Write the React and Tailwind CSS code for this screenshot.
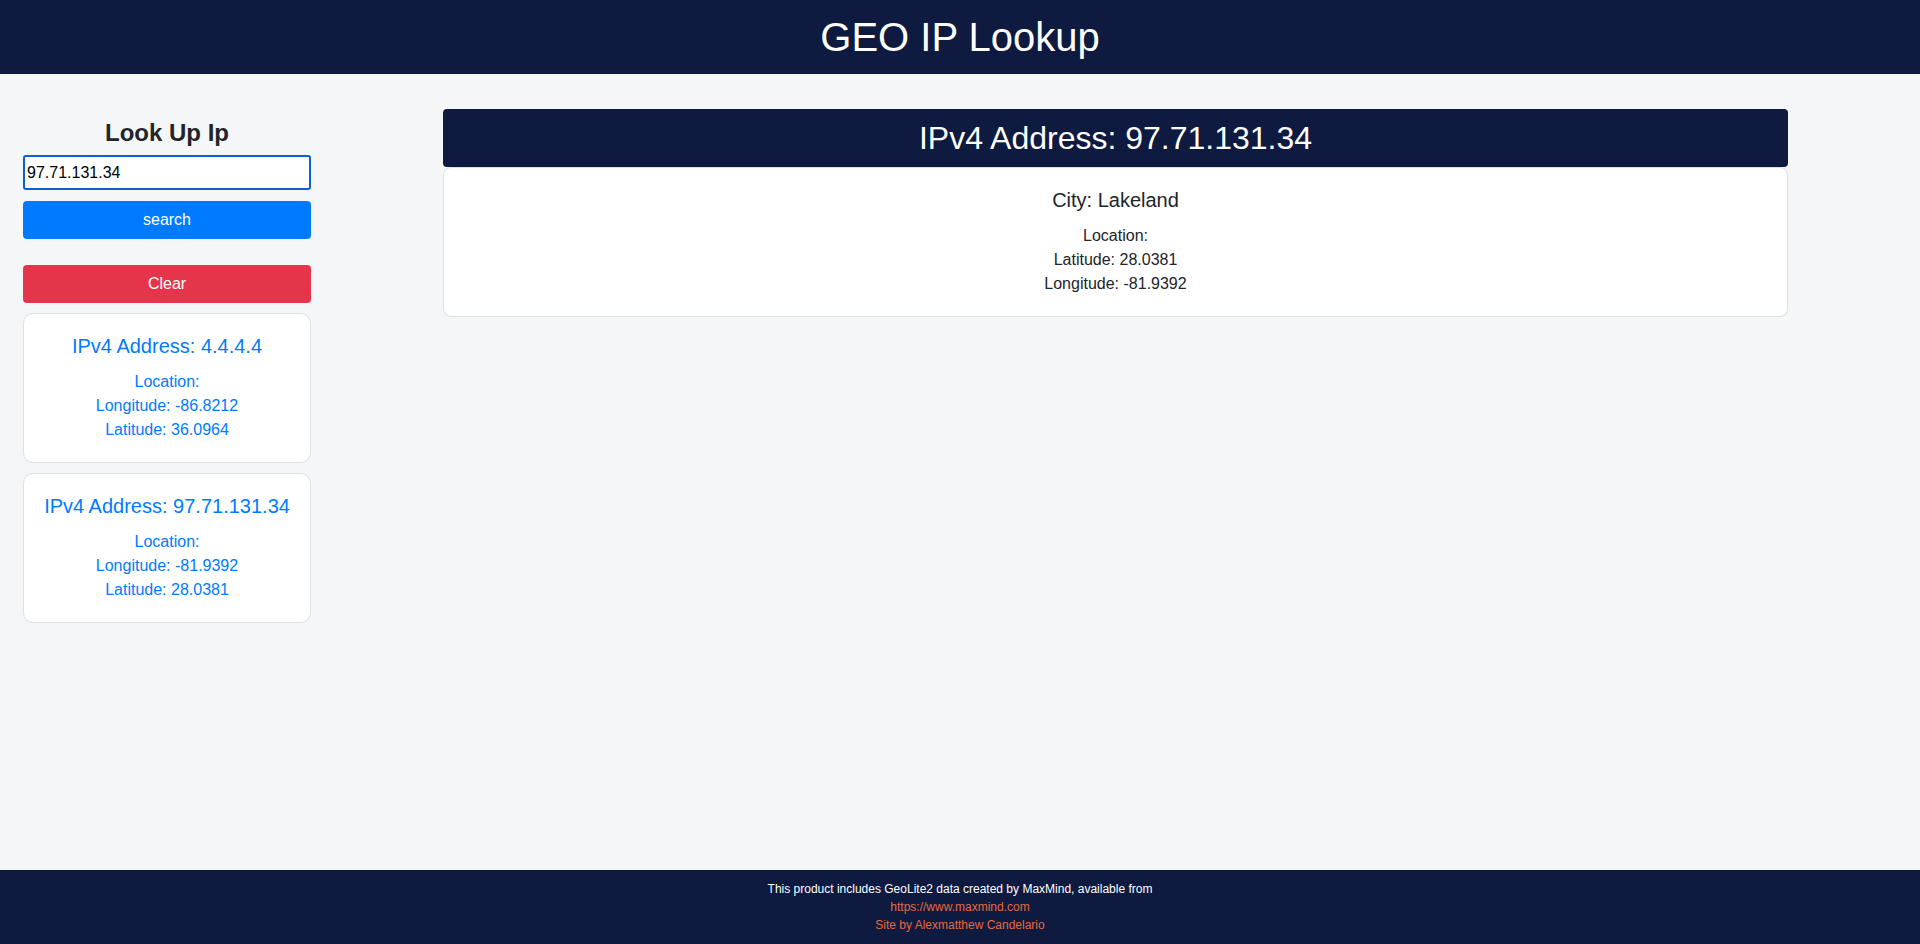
import { useState } from "react";

const history = [
  { ip: "4.4.4.4", longitude: "-86.8212", latitude: "36.0964" },
  { ip: "97.71.131.34", longitude: "-81.9392", latitude: "28.0381" },
];

const current = {
  ip: "97.71.131.34",
  city: "Lakeland",
  latitude: "28.0381",
  longitude: "-81.9392",
};

function HistoryCard({ item }) {
  return (
    <div className="bg-white border border-[#dcdfe3] rounded-[10px] p-5 text-center text-[#007bff]">
      <h5 className="text-[20px] leading-[24px] mb-3">IPv4 Address: {item.ip}</h5>
      <p className="text-[16px] leading-6">
        Location:
        <br />
        Longitude: {item.longitude}
        <br />
        Latitude: {item.latitude}
      </p>
    </div>
  );
}

export default function App() {
  const [query, setQuery] = useState("97.71.131.34");

  return (
    <div
      className="h-[944px] flex flex-col bg-[#f5f6f8] text-[#212529]"
      style={{ fontFamily: '"Liberation Sans", Arial, sans-serif' }}
    >
      {/* Header */}
      <header className="h-[74px] shrink-0 bg-[#0e1a40] flex items-center justify-center">
        <h1 className="text-white text-[40px] leading-[48px]">GEO IP Lookup</h1>
      </header>

      {/* Body */}
      <main className="flex-1 flex px-[23px]">
        {/* Sidebar */}
        <aside className="w-[288px] shrink-0 pt-[44px] flex flex-col">
          <h4 className="text-[24px] leading-[29px] font-bold text-center mb-2">Look Up Ip</h4>
          <input
            value={query}
            onChange={(e) => setQuery(e.target.value)}
            className="h-[35px] w-full bg-white border-2 border-[#0b5fcf] rounded-[3px] px-[2px] text-[16px] text-black outline-none"
          />
          <button className="mt-[11px] h-[38px] w-full rounded-[4px] bg-[#007bff] text-white text-[16px]">
            search
          </button>
          <button className="mt-[26px] h-[38px] w-full rounded-[4px] bg-[#e4354b] text-white text-[16px]">
            Clear
          </button>
          <div className="mt-[10px] flex flex-col gap-[10px]">
            {history.map((item) => (
              <HistoryCard key={item.ip} item={item} />
            ))}
          </div>
        </aside>

        {/* Result */}
        <section className="ml-[132px] w-[1345px] pt-[35px]">
          <div className="h-[58px] bg-[#0e1a40] rounded-[4px] flex items-center justify-center">
            <h2 className="text-white text-[32px] leading-[38px]">IPv4 Address: {current.ip}</h2>
          </div>
          <div className="bg-white border border-[#dcdfe3] rounded-[8px] p-5 text-center">
            <h5 className="text-[20px] leading-[24px] mb-3">City: {current.city}</h5>
            <p className="text-[16px] leading-6">
              Location:
              <br />
              Latitude: {current.latitude}
              <br />
              Longitude: {current.longitude}
            </p>
          </div>
        </section>
      </main>

      {/* Footer */}
      <footer className="h-[74px] shrink-0 bg-[#0e1a40] py-[10px] text-center text-[12px] leading-[18px]">
        <p className="text-white">
          This product includes GeoLite2 data created by MaxMind, available from
        </p>
        <p>
          <a className="text-[#e8683c]">https://www.maxmind.com</a>
        </p>
        <p className="text-[#e8683c]">Site by Alexmatthew Candelario</p>
      </footer>
    </div>
  );
}
